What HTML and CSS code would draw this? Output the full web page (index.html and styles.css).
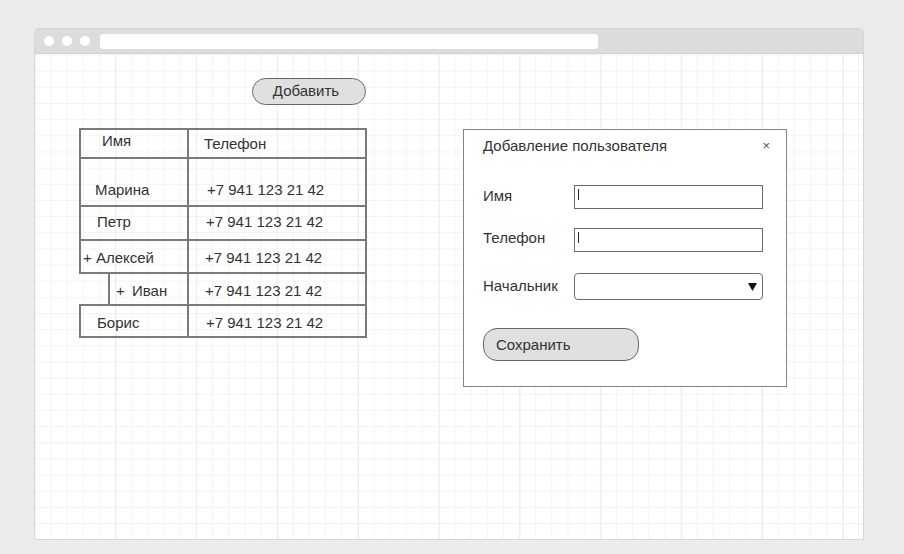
FILE: index.html
```html
<!DOCTYPE html>
<html lang="ru">
<head>
<meta charset="utf-8">
<title>Пользователи</title>
<link rel="stylesheet" href="styles.css">
</head>
<body>
<div class="window">
  <div class="titlebar">
    <span class="dot"></span><span class="dot"></span><span class="dot"></span>
    <div class="urlbar"></div>
  </div>
  <div class="stage">
    <div class="toolbar">
      <div class="btn-add">Добавить</div>
    </div>
    <div class="workspace">
      <div class="table">
        <div class="cell c-head-name">Имя</div>
        <div class="cell c-head-phone">Телефон</div>
        <div class="cell c-marina">Марина</div>
        <div class="cell c-phone c-phone-marina">+7 941 123 21 42</div>
        <div class="cell c-petr">Петр</div>
        <div class="cell c-phone c-phone-petr">+7 941 123 21 42</div>
        <div class="cell c-alexey">+ Алексей</div>
        <div class="cell c-phone c-phone-alexey">+7 941 123 21 42</div>
        <div class="cell c-ivan"><span class="plus">+</span>Иван</div>
        <div class="cell c-phone c-phone-ivan">+7 941 123 21 42</div>
        <div class="cell c-boris">Борис</div>
        <div class="cell c-phone c-phone-boris">+7 941 123 21 42</div>
      </div>
      <div class="dialog">
        <div class="dialog-head">
          <span class="dialog-title">Добавление пользователя</span>
          <span class="dialog-close">×</span>
        </div>
        <div class="field f-name">
          <span class="label">Имя</span>
          <div class="input"><span class="caret"></span></div>
        </div>
        <div class="field f-phone">
          <span class="label">Телефон</span>
          <div class="input"><span class="caret"></span></div>
        </div>
        <div class="field f-boss">
          <span class="label">Начальник</span>
          <div class="select">
            <svg class="arrow" width="9" height="8" viewBox="0 0 9 8"><polygon points="0,0 9,0 4.5,8" fill="#111"/></svg>
          </div>
        </div>
        <div class="btn-save">Сохранить</div>
      </div>
    </div>
  </div>
</div>
</body>
</html>
```

FILE: styles.css
```css
* { box-sizing: border-box; }

html, body {
  margin: 0;
  background: #ececec;
  font-family: "Liberation Sans", Arial, sans-serif;
  color: #333;
}

body {
  padding: 28px 0 0 34px;
}

.window {
  width: 830px;
  height: 512px;
  border: 1px solid #d6d6d6;
  border-radius: 4px 4px 0 0;
  overflow: hidden;
  display: flex;
  flex-direction: column;
  background: #fff;
}

.titlebar {
  height: 25px;
  flex: none;
  background: #dcdcdc;
  border-bottom: 1px solid #d2d2d2;
  display: flex;
  align-items: center;
  padding-left: 9px;
  gap: 8px;
}

.dot {
  width: 10px;
  height: 10px;
  border-radius: 50%;
  background: #fff;
}

.urlbar {
  margin-left: 2px;
  width: 498px;
  height: 15px;
  background: #fff;
  border-radius: 3px;
}

.stage {
  flex: 1;
  padding: 24px 0 0 44px;
  background-color: #fff;
  background-image:
    linear-gradient(to right, #ececec 1px, transparent 1px),
    linear-gradient(to right, #f3f3f3 1px, transparent 1px),
    linear-gradient(to bottom, #f3f3f3 1px, transparent 1px);
  background-size: 80.85px 100%, 16.17px 100%, 100% 16.17px;
  background-position: 80.3px 0, 15.5px 0, 0 16.7px;
}

.toolbar {
  width: 287px;
  display: flex;
  justify-content: flex-end;
}

.btn-add {
  width: 114px;
  height: 27px;
  border: 1px solid #666;
  border-radius: 14px;
  background: #e0e0e0;
  display: flex;
  align-items: center;
  justify-content: center;
  padding-right: 6px;
  padding-bottom: 2px;
  font-size: 15px;
}

.workspace {
  margin-top: 23px;
  display: flex;
  align-items: flex-start;
  gap: 96px;
}

/* table */
.table {
  display: grid;
  grid-template-columns: 108px 178px;
  grid-template-rows: 29px 48px 34px 33px 32px 32px;
  font-size: 15px;
  padding-right: 2px;
  padding-bottom: 2px;
}

.cell {
  border: 2px solid #7a7a7a;
  margin-right: -2px;
  margin-bottom: -2px;
  display: flex;
  align-items: center;
  white-space: nowrap;
}

.c-head-name { padding-left: 21px; padding-bottom: 6px; }
.c-head-phone { padding-left: 15px; padding-bottom: 1px; }
.c-marina { padding-left: 14px; padding-top: 14px; }
.c-phone { padding-left: 17px; }
.c-phone-marina { padding-left: 18px; padding-top: 14px; }
.c-petr { padding-left: 16px; padding-bottom: 3px; }
.c-phone-petr { padding-bottom: 3px; }
.c-alexey { padding-left: 2px; padding-top: 1px; }
.c-phone-alexey { padding-left: 16px; padding-top: 1px; }
.c-ivan { margin-left: 29px; padding-left: 6px; padding-top: 3px; }
.c-phone-ivan { padding-left: 16px; padding-top: 3px; }
.c-ivan .plus { width: 16px; }
.c-boris { padding-left: 16px; padding-top: 2px; }
.c-phone-boris { padding-top: 2px; }

/* dialog */
.dialog {
  margin-top: 1px;
  width: 324px;
  height: 258px;
  border: 1px solid #858585;
  background: #fff;
  padding: 0 16px 0 19px;
  font-size: 15px;
}

.dialog-head {
  margin-top: 4px;
  height: 22px;
  display: flex;
  align-items: center;
  justify-content: space-between;
}

.dialog-close {
  font-size: 13px;
  color: #555;
}

.field {
  display: flex;
  align-items: center;
}

.f-name { margin-top: 29px; }
.f-phone { margin-top: 19px; }
.f-boss { margin-top: 21px; }

.label {
  width: 91px;
  flex: none;
}

.f-name .label { padding-bottom: 3px; }
.f-phone .label { padding-bottom: 5px; }
.f-boss .label { padding-bottom: 2px; }

.input {
  width: 189px;
  height: 24px;
  border: 1px solid #6a6a6a;
  background: #fff;
  padding: 3px 0 0 3px;
}

.caret {
  display: block;
  width: 1px;
  height: 11px;
  background: #222;
}

.select {
  width: 189px;
  height: 27px;
  border: 1px solid #6a6a6a;
  border-radius: 4px;
  background: #fff;
  display: flex;
  align-items: center;
  justify-content: flex-end;
  padding-right: 5px;
}

.arrow { display: block; }

.btn-save {
  margin-top: 28px;
  width: 156px;
  height: 33px;
  border: 1px solid #666;
  border-radius: 14px;
  background: #e0e0e0;
  display: flex;
  align-items: center;
  padding-left: 12px;
}
```
